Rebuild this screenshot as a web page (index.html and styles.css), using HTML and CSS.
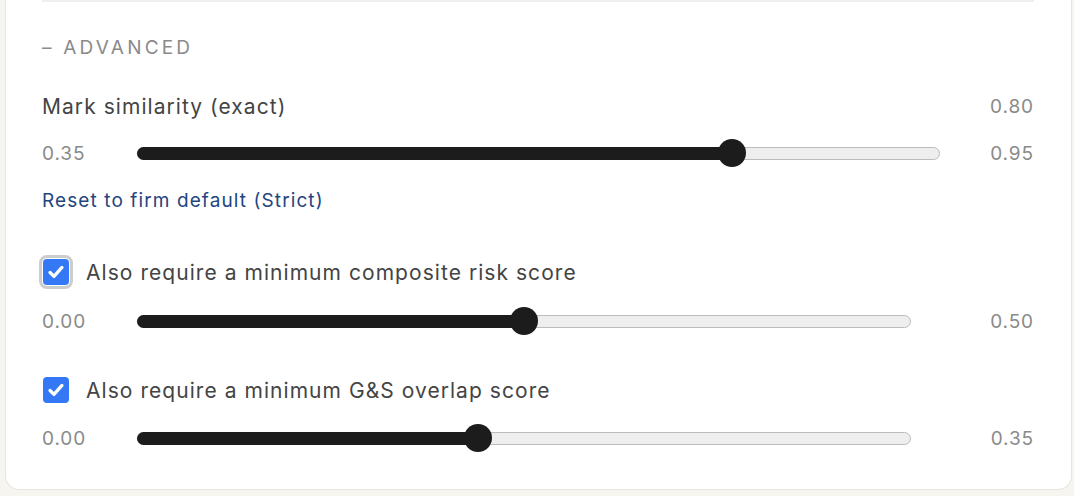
FILE: index.html
```html
<!DOCTYPE html>
<html lang="en">
<head>
  <meta charset="UTF-8" />
  <title>Advanced thresholds</title>
  <link rel="stylesheet" href="styles.css">
</head>
<body>

  <div class="card">
    <div class="prev-section"></div>

    <div class="section-title">&ndash; ADVANCED</div>

    <div class="label-row">
      <span class="label">Mark similarity (exact)</span>
      <span class="value">0.80</span>
    </div>

    <div class="slider-row wide">
      <span class="bound">0.35</span>
      <div class="track">
        <div class="fill" style="width: calc(14px + 0.75 * (100% - 28px))"></div>
        <div class="thumb" style="left: calc(14px + 0.75 * (100% - 28px))"></div>
      </div>
      <span class="bound right">0.95</span>
    </div>

    <a class="reset" href="#">Reset to firm default (Strict)</a>

    <label class="check-row first">
      <span class="box focused">
        <svg viewBox="0 0 24 24" width="22" height="22"><path d="M5.5 12.5l4.3 4.3L18.5 7" fill="none" stroke="#fff" stroke-width="3.6" stroke-linecap="round" stroke-linejoin="round"/></svg>
      </span>
      <span class="check-text">Also require a minimum composite risk score</span>
    </label>

    <div class="slider-row narrow">
      <span class="bound">0.00</span>
      <div class="track">
        <div class="fill" style="width: calc(14px + 0.5 * (100% - 28px))"></div>
        <div class="thumb" style="left: calc(14px + 0.5 * (100% - 28px))"></div>
      </div>
      <span class="bound right">0.50</span>
    </div>

    <label class="check-row">
      <span class="box">
        <svg viewBox="0 0 24 24" width="22" height="22"><path d="M5.5 12.5l4.3 4.3L18.5 7" fill="none" stroke="#fff" stroke-width="3.6" stroke-linecap="round" stroke-linejoin="round"/></svg>
      </span>
      <span class="check-text">Also require a minimum G&amp;S overlap score</span>
    </label>

    <div class="slider-row narrow last">
      <span class="bound">0.00</span>
      <div class="track">
        <div class="fill" style="width: calc(14px + 0.4375 * (100% - 28px))"></div>
        <div class="thumb" style="left: calc(14px + 0.4375 * (100% - 28px))"></div>
      </div>
      <span class="bound right">0.35</span>
    </div>
  </div>

</body>
</html>
```

FILE: styles.css
```css
:root {
  --page-bg: #f6f5f0;
  --card-border: #e6e5df;
  --text: #444;
  --muted: #8a8a8a;
  --link: #1f4580;
  --ink: #1c1c1c;
  --track-bg: #eeeeee;
  --track-border: #bcbcbc;
  --check: #3478f6;
}

body {
  font-family: 'Inter', 'Liberation Sans', sans-serif;
  background: var(--page-bg);
  color: var(--text);
  margin: 0;
  padding: 0;
}

.card {
  background: #fff;
  margin: -20px 2px 0 5px;
  padding: 20px 37px 37px 36px;
  border: 1px solid var(--card-border);
  border-top: none;
  border-radius: 0 0 14px 14px;
}

.prev-section {
  border-bottom: 2px solid #efefef;
}

.section-title {
  margin-top: 34px;
  font-size: 19px;
  line-height: 24px;
  letter-spacing: 3.2px;
  color: var(--muted);
}

.label-row {
  display: flex;
  justify-content: space-between;
  align-items: center;
  margin-top: 32px;
  height: 28px;
}

.label {
  font-size: 21px;
  letter-spacing: 1.05px;
}

.value {
  font-size: 19px;
  letter-spacing: 0.9px;
  color: var(--muted);
}

.slider-row {
  display: grid;
  align-items: center;
  height: 28px;
  margin-top: 19px;
}

.slider-row.wide {
  grid-template-columns: 95px 1fr 94px;
}

.slider-row.narrow {
  grid-template-columns: 95px 1fr 123px;
  margin-top: 19px;
}

.slider-row.last {
  margin-top: 18px;
}

.bound {
  font-size: 19px;
  letter-spacing: 0.9px;
  color: var(--muted);
}

.bound.right {
  text-align: right;
}

.track {
  position: relative;
  height: 13px;
  box-sizing: border-box;
  background: var(--track-bg);
  border: 1px solid var(--track-border);
  border-radius: 7px;
}

.fill {
  position: absolute;
  left: -1px;
  top: -1px;
  bottom: -1px;
  background: var(--ink);
  border-radius: 7px 0 0 7px;
}

.thumb {
  position: absolute;
  top: 50%;
  width: 28px;
  height: 28px;
  margin: -14px 0 0 -14px;
  background: var(--ink);
  border-radius: 50%;
}

.reset {
  display: block;
  margin-top: 22px;
  font-size: 19px;
  line-height: 24px;
  letter-spacing: 1.1px;
  color: var(--link);
  text-decoration: none;
}

.check-row {
  display: flex;
  align-items: center;
  gap: 17px;
  height: 32px;
  margin-top: 39px;
}

.check-row.first {
  margin-top: 43px;
}

.box {
  width: 26px;
  height: 26px;
  margin-left: 1px;
  border-radius: 4px;
  background: var(--check);
  display: flex;
  align-items: center;
  justify-content: center;
}

.box.focused {
  outline: 3px solid #cdcdcd;
  outline-offset: 1px;
}

.check-text {
  font-size: 21px;
  letter-spacing: 1.05px;
}
```
